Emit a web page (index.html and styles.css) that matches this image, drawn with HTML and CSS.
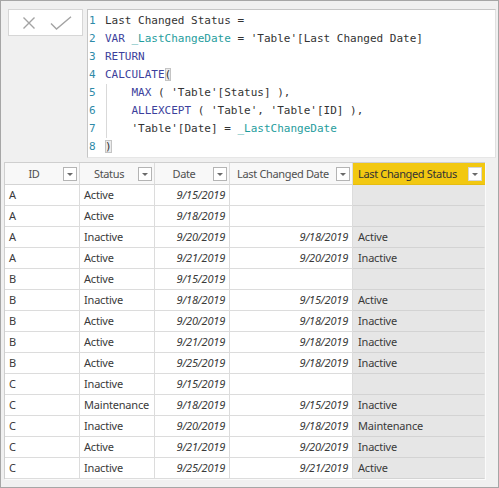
FILE: index.html
```html
<!DOCTYPE html>
<html>
<head>
<meta charset="utf-8">
<link rel="stylesheet" href="styles.css">
</head>
<body>
<div class="frame">
  <div class="formula">
    <div class="commit">
      <svg class="ico" width="14" height="14" viewBox="0 0 14 14"><path d="M1.5 1.5 L12.5 12.5 M12.5 1.5 L1.5 12.5" stroke="#a3a3a3" stroke-width="1.4" fill="none"/></svg>
      <svg class="ico" width="22" height="14" viewBox="0 0 22 14"><path d="M1 7.5 L6.5 13 L21 0.8" stroke="#a3a3a3" stroke-width="1.4" fill="none"/></svg>
    </div>
    <div class="editor">
      <div class="line"><span class="ln">1</span><span class="code">Last Changed Status =</span></div>
      <div class="line"><span class="ln">2</span><span class="code"><span class="kw">VAR</span> <span class="var">_LastChangeDate</span> = 'Table'[Last Changed Date]</span></div>
      <div class="line"><span class="ln">3</span><span class="code"><span class="kw">RETURN</span></span></div>
      <div class="line"><span class="ln">4</span><span class="code"><span class="kw">CALCULATE</span><span class="match">(</span></span></div>
      <div class="line"><span class="ln">5</span><span class="code guided">    <span class="kw">MAX</span> ( 'Table'[Status] ),</span></div>
      <div class="line"><span class="ln">6</span><span class="code guided">    <span class="kw">ALLEXCEPT</span> ( 'Table', 'Table'[ID] ),</span></div>
      <div class="line"><span class="ln">7</span><span class="code guided">    'Table'[Date] = <span class="var">_LastChangeDate</span></span></div>
      <div class="line"><span class="ln">8</span><span class="code"><span class="match">)</span></span></div>
    </div>
  </div>
  <div class="panel">
    <div class="grid">
      <div class="th"><span class="tt">ID</span><span class="dd"></span></div>
      <div class="th"><span class="tt">Status</span><span class="dd"></span></div>
      <div class="th"><span class="tt">Date</span><span class="dd"></span></div>
      <div class="th"><span class="tt">Last Changed Date</span><span class="dd"></span></div>
      <div class="th sel"><span class="tt">Last Changed Status</span><span class="dd"></span></div>

      <div class="td">A</div><div class="td">Active</div><div class="td dt">9/15/2019</div><div class="td dt"></div><div class="td calc"></div>
      <div class="td">A</div><div class="td">Active</div><div class="td dt">9/18/2019</div><div class="td dt"></div><div class="td calc"></div>
      <div class="td">A</div><div class="td">Inactive</div><div class="td dt">9/20/2019</div><div class="td dt">9/18/2019</div><div class="td calc">Active</div>
      <div class="td">A</div><div class="td">Active</div><div class="td dt">9/21/2019</div><div class="td dt">9/20/2019</div><div class="td calc">Inactive</div>
      <div class="td">B</div><div class="td">Active</div><div class="td dt">9/15/2019</div><div class="td dt"></div><div class="td calc"></div>
      <div class="td">B</div><div class="td">Inactive</div><div class="td dt">9/18/2019</div><div class="td dt">9/15/2019</div><div class="td calc">Active</div>
      <div class="td">B</div><div class="td">Active</div><div class="td dt">9/20/2019</div><div class="td dt">9/18/2019</div><div class="td calc">Inactive</div>
      <div class="td">B</div><div class="td">Active</div><div class="td dt">9/21/2019</div><div class="td dt">9/18/2019</div><div class="td calc">Inactive</div>
      <div class="td">B</div><div class="td">Active</div><div class="td dt">9/25/2019</div><div class="td dt">9/18/2019</div><div class="td calc">Inactive</div>
      <div class="td">C</div><div class="td">Inactive</div><div class="td dt">9/15/2019</div><div class="td dt"></div><div class="td calc"></div>
      <div class="td">C</div><div class="td">Maintenance</div><div class="td dt">9/18/2019</div><div class="td dt">9/15/2019</div><div class="td calc">Inactive</div>
      <div class="td">C</div><div class="td">Inactive</div><div class="td dt">9/20/2019</div><div class="td dt">9/18/2019</div><div class="td calc">Maintenance</div>
      <div class="td">C</div><div class="td">Active</div><div class="td dt">9/21/2019</div><div class="td dt">9/20/2019</div><div class="td calc">Inactive</div>
      <div class="td">C</div><div class="td">Inactive</div><div class="td dt">9/25/2019</div><div class="td dt">9/21/2019</div><div class="td calc">Active</div>
    </div>
  </div>
</div>
</body>
</html>
```
FILE: styles.css
```css
* { box-sizing: border-box; }
html, body { margin: 0; padding: 0; background: #f0f0f0; }
.frame {
  width: 499px;
  height: 488px;
  border: 1px solid #a6a6a6;
  background: #f0f0f0;
  padding-top: 8px;
  overflow: hidden;
}
.formula {
  display: flex;
  align-items: flex-start;
  padding-left: 7px;
  gap: 4px;
}
.commit {
  width: 75px;
  height: 27px;
  background: #fff;
  border: 1px solid #d6d6d6;
  display: flex;
  align-items: center;
  padding-left: 13px;
  gap: 14px;
}
.ico { display: block; }
.editor {
  width: 409px;
  height: 149px;
  background: #fff;
  border: 1px solid #c6c6c6;
  border-right-color: #e0e0e0;
  border-bottom-color: #e6e6e6;
  padding-top: 2px;
  font-family: "DejaVu Sans Mono", "Liberation Mono", monospace;
  font-size: 11px;
  color: #333;
}
.line { display: flex; height: 18px; line-height: 18px; }
.ln { width: 17px; padding-left: 1px; color: #2e8aa8; }
.code { white-space: pre; }
.guided {
  background: linear-gradient(#d9d9d9, #d9d9d9) no-repeat 1px 0 / 1px 100%;
}
.kw { color: #3c3f9c; }
.var { color: #1f9d9d; }
.match {
  background: #ebebeb;
  box-shadow: inset 0 0 0 1px #c4c4c4;
}
.panel {
  margin-top: 4px;
  padding-left: 3px;
}
.grid {
  display: grid;
  grid-template-columns: 75px 75px 75px 123px 132px;
  grid-auto-rows: 21px;
  grid-template-rows: 22px;
  width: 481px;
  border-left: 1px solid #cfcfcf;
  border-top: 1px solid #cfcfcf;
  font-family: "Noto Sans", "Segoe UI", sans-serif;
  font-size: 11px;
  letter-spacing: -0.2px;
  color: #3a3a3a;
  box-shadow: 1px 1px 0 #fafafa;
}
.th {
  display: flex;
  align-items: center;
  background: #f8f8f8;
  border-right: 1px solid #dcdcdc;
  border-bottom: 1px solid #d4d4d4;
  padding-right: 2px;
  color: #505050;
  font-size: 11px;
  letter-spacing: -0.35px;
}
.th .tt { flex: 1; text-align: center; white-space: nowrap; }
.th .dd {
  width: 14px;
  height: 14px;
  background: #fff;
  border: 1px solid #b4b4b4;
  position: relative;
  flex: none;
}
.th .dd::after {
  content: "";
  position: absolute;
  left: 3px;
  top: 5px;
  border-left: 3px solid transparent;
  border-right: 3px solid transparent;
  border-top: 3px solid #6a6a6a;
}
.th.sel {
  background: #f2c811;
  border-right-color: #f2c811;
  border-bottom-color: #e6bd10;
  color: #333;
}
.th.sel .tt { text-align: left; padding-left: 5px; }
.th.sel .dd { border-color: #d6d6d6; }
.td {
  background: #fff;
  border-right: 1px solid #dcdcdc;
  border-bottom: 1px solid #dcdcdc;
  padding: 0 4px;
  line-height: 20px;
  white-space: nowrap;
  overflow: hidden;
}
.td.dt { text-align: right; font-style: italic; }
.td.calc {
  background: #e6e6e6;
  border-right-color: #e6e6e6;
  border-bottom-color: #d3d3d3;
  padding-left: 5px;
}
```
